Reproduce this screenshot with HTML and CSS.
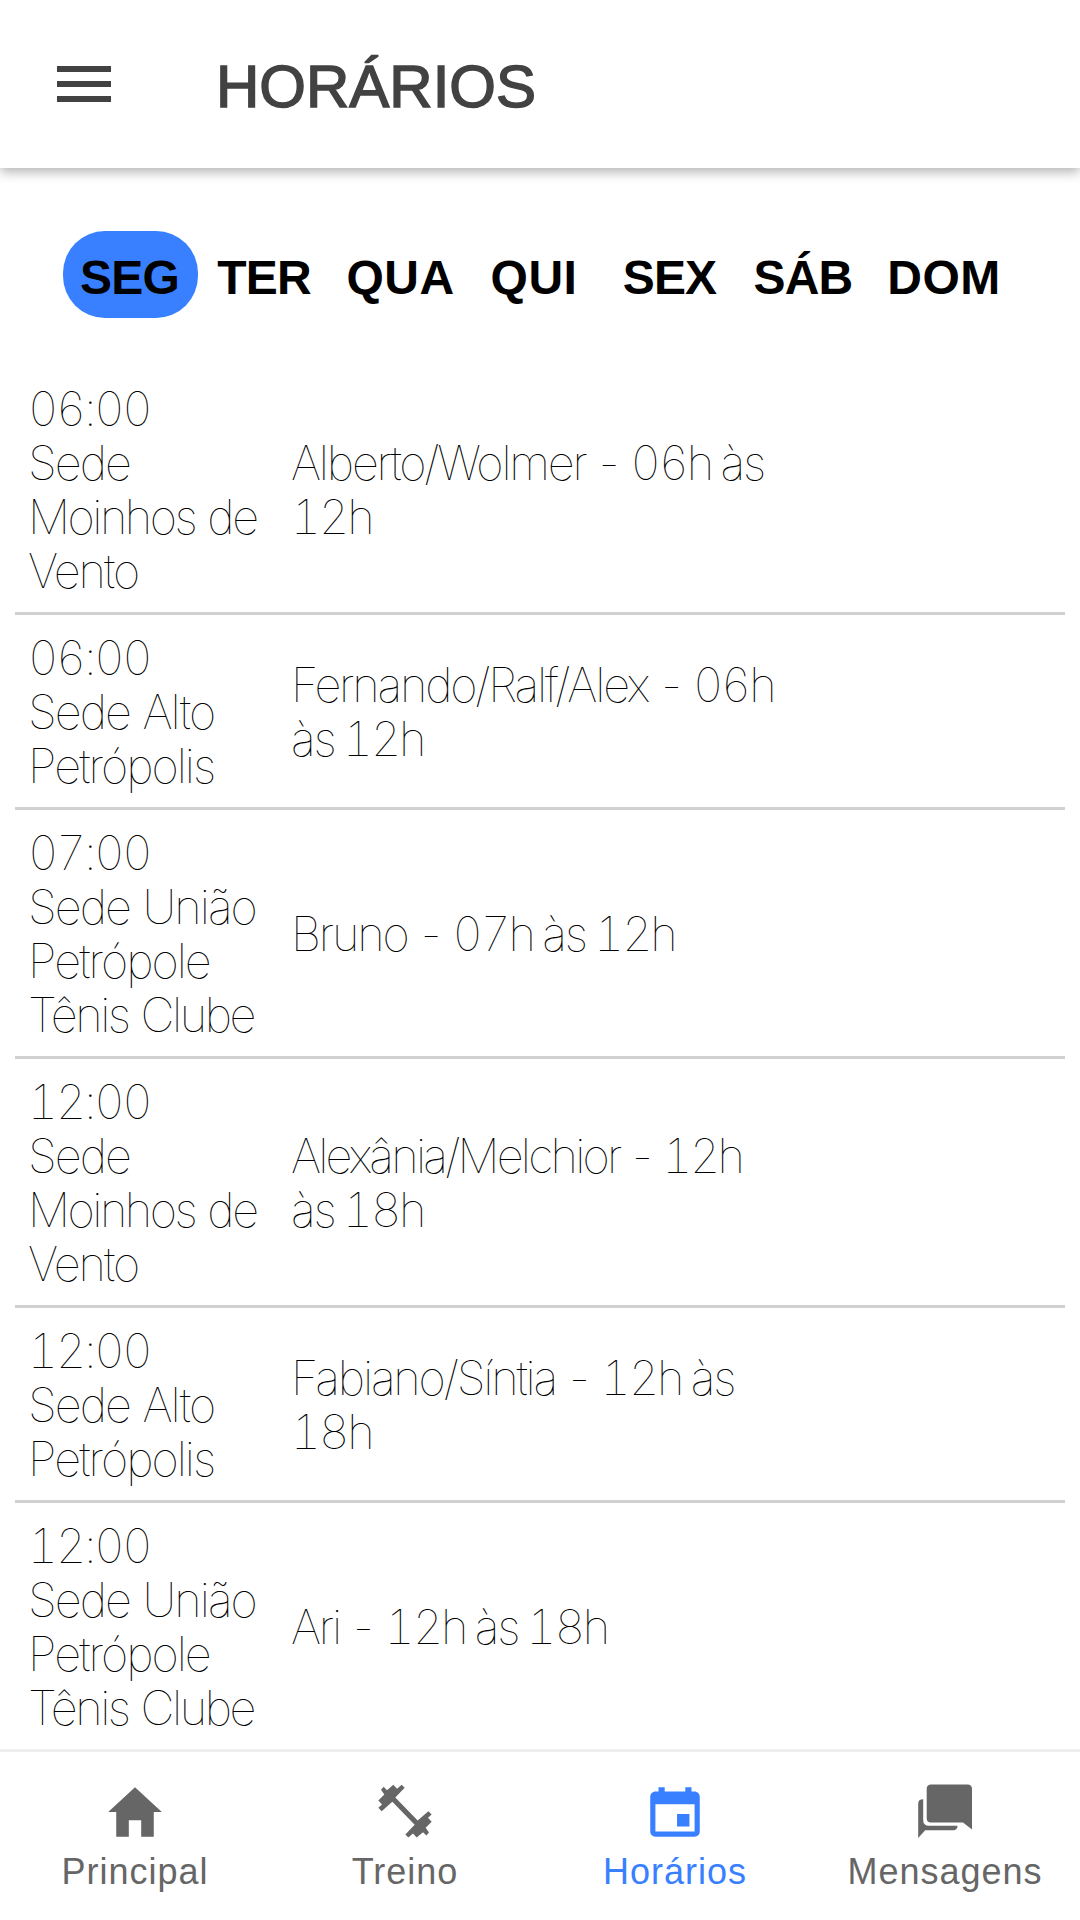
FILE: index.html
```html
<!DOCTYPE html>
<html lang="pt-BR">
<head>
<meta charset="utf-8">
<title>Horários</title>
<link rel="stylesheet" href="styles.css">
</head>
<body>
<header class="toolbar">
  <svg class="menu" viewBox="0 0 54 36"><path d="M0 0h54v6H0zM0 15h54v6H0zM0 30h54v6H0z"/></svg>
  <h1 class="title">HORÁRIOS</h1>
</header>
<nav class="days">
  <span class="day active"><span>SEG</span></span>
  <span class="day"><span>TER</span></span>
  <span class="day wide"><span>QUA</span></span>
  <span class="day wide"><span>QUI</span></span>
  <span class="day"><span>SEX</span></span>
  <span class="day"><span>SÁB</span></span>
  <span class="day wide"><span>DOM</span></span>
</nav>
<main class="list">
  <div class="row"><p class="place"><span class="time">06:00</span><br><span>Sede</span><br><span class="tight">Moinhos de</span><br><span>Vento</span></p><p class="who"><span>Alberto/Wolmer - 06h às</span><br><span>12h</span></p></div>
  <div class="row"><p class="place"><span class="time">06:00</span><br><span>Sede Alto</span><br><span>Petrópolis</span></p><p class="who"><span>Fernando/Ralf/Alex - 06h</span><br><span>às 12h</span></p></div>
  <div class="row"><p class="place"><span class="time">07:00</span><br><span>Sede União</span><br><span>Petrópole</span><br><span class="tight">Tênis Clube</span></p><p class="who"><span>Bruno - 07h às 12h</span></p></div>
  <div class="row"><p class="place"><span class="time">12:00</span><br><span>Sede</span><br><span class="tight">Moinhos de</span><br><span>Vento</span></p><p class="who"><span class="tight">Alexânia/Melchior - 12h</span><br><span>às 18h</span></p></div>
  <div class="row"><p class="place"><span class="time">12:00</span><br><span>Sede Alto</span><br><span>Petrópolis</span></p><p class="who"><span>Fabiano/Síntia - 12h às</span><br><span>18h</span></p></div>
  <div class="row"><p class="place"><span class="time">12:00</span><br><span>Sede União</span><br><span>Petrópole</span><br><span class="tight">Tênis Clube</span></p><p class="who"><span>Ari - 12h às 18h</span></p></div>
</main>
<footer class="tabs">
  <div class="tab">
    <svg class="icon" viewBox="0 0 512 512"><path d="M208 448V320h96v128h97.600V256H464L256 64 48 256h62.400v192z"/></svg>
    <span>Principal</span>
  </div>
  <div class="tab">
    <svg class="icon" viewBox="6 13.5 198 198"><path d="M41 37L51 47 70 31 81 43 95 31 104 40 76 69 143 138 175 110 185 120 174 130 185 142 167 160 177 174 169 183 159 173 140 189 129 177 115 189 106 180 134 151 67 82 35 110 25 100 36 90 25 78 43 60 33 46z"/></svg>
    <span>Treino</span>
  </div>
  <div class="tab active">
    <svg class="icon" viewBox="0 0 512 512"><path d="M368.005 272h-96v96h96v-96zm-32-208v32h-160V64h-48v32h-24.010c-22.002 0-40 17.998-40 40v272c0 22.002 17.998 40 40 40h304.010c22.002 0 40-17.998 40-40V136c0-22.002-17.998-40-40-40h-24V64h-48zm72 344h-304.010V196h304.010v212z"/></svg>
    <span>Horários</span>
  </div>
  <div class="tab">
    <svg class="icon" viewBox="0 0 66 66"><path d="M19 5.500h36.500q4.500 0 4.500 4.500v40.500l-9-7H19q-4.300 0-4.300-4.300V10q0-4.500 4.300-4.500zM11.200 20.200V41q0 5.800 5.800 5.800h28.500q0 4.400-4.400 4.400H13.200l-7 7.800V24.500q0-4.300 5-4.300z"/></svg>
    <span>Mensagens</span>
  </div>
</footer>
</body>
</html>
```

FILE: styles.css
```css
* { box-sizing: border-box; }
body {
  margin: 0;
  height: 1920px;
  display: flex;
  flex-direction: column;
  overflow: hidden;
  background: #fff;
  color: #000;
  font-family: "Liberation Sans", sans-serif;
}
.toolbar {
  flex: none;
  height: 168px;
  padding: 0 57px;
  display: flex;
  align-items: center;
  gap: 105px;
  box-shadow: 0 4px 11px rgba(0, 0, 0, .3);
  color: #424242;
}
.menu { width: 54px; height: 36px; fill: currentColor; }
.title {
  margin: 6px 0 0;
  font-size: 60px;
  font-weight: 400;
  line-height: 72px;
  -webkit-text-stroke: 1.5px currentColor;
}
.days {
  flex: none;
  margin: 63px 0 48px 63px;
  height: 87px;
  display: grid;
  grid-template-columns: 135px 132px 141px 126px 145px 122px 160px;
  font-size: 48px;
  font-weight: 700;
}
.day {
  display: flex;
  align-items: center;
  justify-content: center;
  padding-top: 5px;
  border-radius: 42px;
  letter-spacing: -.8px;
}
.day.wide { letter-spacing: .5px; }
.day.active { padding-right: 2px; background: #3880ff; }
.list {
  flex: 1;
  min-height: 0;
  overflow: hidden;
  padding: 0 15px;
}
.row {
  display: grid;
  grid-template-columns: 263px 1fr;
  align-items: center;
  padding: 16px 13px 14px;
  border-bottom: 3px solid #d1d1d1;
  font-family: Inter, sans-serif;
  font-weight: 100;
  font-size: 47px;
  line-height: 54px;
  font-variant-numeric: tabular-nums;
  white-space: nowrap;
}
.row p { margin: 0; }
.place { letter-spacing: -2px; word-spacing: 2px; }
.place .time { letter-spacing: -2.3px; }
.place .tight { letter-spacing: -2.5px; }
.who { letter-spacing: -2.2px; word-spacing: -2px; }
.who .tight { letter-spacing: -2.8px; }
.tabs {
  flex: none;
  height: 171px;
  border-top: 3px solid #eee;
  display: grid;
  grid-template-columns: repeat(4, 1fr);
  color: #666;
}
.tab {
  display: flex;
  flex-direction: column;
  align-items: center;
  padding-top: 27px;
  font-size: 36px;
  line-height: 42px;
  letter-spacing: 1px;
}
.tab.active { color: #3880ff; }
.icon { width: 66px; height: 66px; margin-bottom: 6px; fill: currentColor; }
```
